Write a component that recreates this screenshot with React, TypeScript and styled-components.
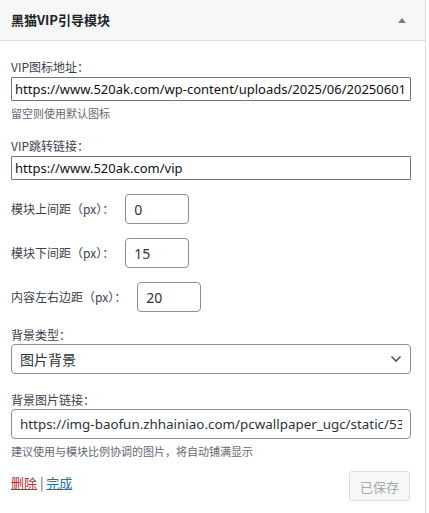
import React from "react";
import styled, { createGlobalStyle } from "styled-components";

const Global = createGlobalStyle`
  html, body { margin: 0; padding: 0; background: #ffffff; }
  body { font-family: "Segoe UI", "Noto Sans", "Noto Sans CJK SC", sans-serif; }
  * { box-sizing: border-box; }
`;

const cjk = `"Noto Sans CJK SC", "Noto Sans", sans-serif`;
const latin = `"Segoe UI", "Noto Sans", "Noto Sans CJK SC", sans-serif`;

const Widget = styled.div`
  width: 426px;
  border-right: 1px solid #dcdcde;
  background: #fff;
  min-height: 513px;
`;

const Header = styled.div`
  height: 41px;
  background: #f6f7f7;
  border-bottom: 1px solid #dcdcde;
  display: flex;
  align-items: center;
  justify-content: space-between;
  padding: 0 18px 0 11px;
`;

const Title = styled.h3`
  margin: 0;
  font-family: ${cjk};
  font-size: 13px;
  font-weight: 700;
  color: #1d2327;
  line-height: 18px;
`;

const Body = styled.div`
  padding: 18px 15px 0 11px;
`;

const Label = styled.label<{ $mt?: number; $mb?: number }>`
  display: block;
  font-family: ${cjk};
  font-size: 12px;
  line-height: 16px;
  color: #3c434a;
  margin-top: ${(p) => p.$mt ?? 0}px;
  margin-bottom: ${(p) => p.$mb ?? 2}px;
`;

const PlainInput = styled.input`
  display: block;
  width: 400px;
  height: 24px;
  border: 1px solid #767676;
  border-radius: 1px;
  padding: 0 3px;
  font-family: ${latin};
  font-size: 13px;
  color: #111;
  background: #fff;
  outline: none;
`;

const WpInput = styled.input<{ $w?: number }>`
  display: block;
  width: ${(p) => p.$w ?? 400}px;
  height: 30px;
  border: 1px solid #8c8f94;
  border-radius: 4px;
  padding: 0 8px;
  font-family: ${latin};
  font-size: ${(p) => (p.$w ? 14 : 13.4)}px;
  color: #2c3338;
  background: #fff;
  outline: none;
`;

const Desc = styled.p<{ $mt?: number }>`
  margin: ${(p) => p.$mt ?? 4}px 0 0;
  font-family: ${cjk};
  font-size: 11px;
  line-height: 16px;
  color: #646970;
`;

const Row = styled.div`
  display: flex;
  align-items: center;
  gap: 11px;
  margin-top: 14px;
`;

const RowLabel = styled.label`
  font-family: ${cjk};
  font-size: 12px;
  line-height: 16px;
  color: #3c434a;
`;

const SelectBox = styled.div`
  width: 400px;
  height: 30px;
  border: 1px solid #8c8f94;
  border-radius: 4px;
  display: flex;
  align-items: center;
  padding: 0 8px;
  font-family: ${cjk};
  font-size: 14px;
  color: #2c3338;
  justify-content: space-between;
`;

const Actions = styled.div`
  display: flex;
  align-items: center;
  justify-content: space-between;
  margin-top: 12px;
`;

const Links = styled.div`
  font-family: ${cjk};
  font-size: 13px;
  color: #50575e;
  line-height: 18px;
  margin-top: -6px;
`;

const Link = styled.a<{ $danger?: boolean }>`
  color: ${(p) => (p.$danger ? "#b32d2e" : "#2271b1")};
  text-decoration: underline;
  cursor: pointer;
`;

const SaveButton = styled.button`
  width: 61px;
  height: 30px;
  border: 1px solid #dcdcde;
  border-radius: 3px;
  background: #f6f7f7;
  color: #a7aaad;
  font-family: ${cjk};
  font-size: 13px;
  padding: 0;
`;

export default function App() {
  return (
    <>
      <Global />
      <Widget>
        <Header>
          <Title>黑猫VIP引导模块</Title>
          <svg width="10" height="6" viewBox="0 0 10 6">
            <path d="M1 6 L5 1 L9 6 Z" fill="#787c82" />
          </svg>
        </Header>
        <Body>
          <Label>VIP图标地址：</Label>
          <PlainInput
            readOnly
            value="https://www.520ak.com/wp-content/uploads/2025/06/20250601.png"
          />
          <Desc>留空则使用默认图标</Desc>

          <Label $mt={17}>VIP跳转链接：</Label>
          <PlainInput readOnly value="https://www.520ak.com/vip" />

          <Row>
            <RowLabel>模块上间距（px）：</RowLabel>
            <WpInput $w={64} readOnly value="0" />
          </Row>
          <Row>
            <RowLabel>模块下间距（px）：</RowLabel>
            <WpInput $w={64} readOnly value="15" />
          </Row>
          <Row>
            <RowLabel>内容左右边距（px）：</RowLabel>
            <WpInput $w={64} readOnly value="20" />
          </Row>

          <Label $mt={15} $mb={1}>背景类型：</Label>
          <SelectBox>
            <span>图片背景</span>
            <svg width="12" height="8" viewBox="0 0 12 8">
              <path d="M1.5 1.5 L6 6 L10.5 1.5" fill="none" stroke="#50575e" strokeWidth="1.6" />
            </svg>
          </SelectBox>

          <Label $mt={18} $mb={1}>背景图片链接：</Label>
          <WpInput
            readOnly
            value="https://img-baofun.zhhainiao.com/pcwallpaper_ugc/static/535a.jpg"
          />
          <Desc $mt={4}>建议使用与模块比例协调的图片，将自动铺满显示</Desc>

          <Actions>
            <Links>
              <Link $danger>删除</Link> | <Link>完成</Link>
            </Links>
            <SaveButton disabled>已保存</SaveButton>
          </Actions>
        </Body>
      </Widget>
    </>
  );
}
